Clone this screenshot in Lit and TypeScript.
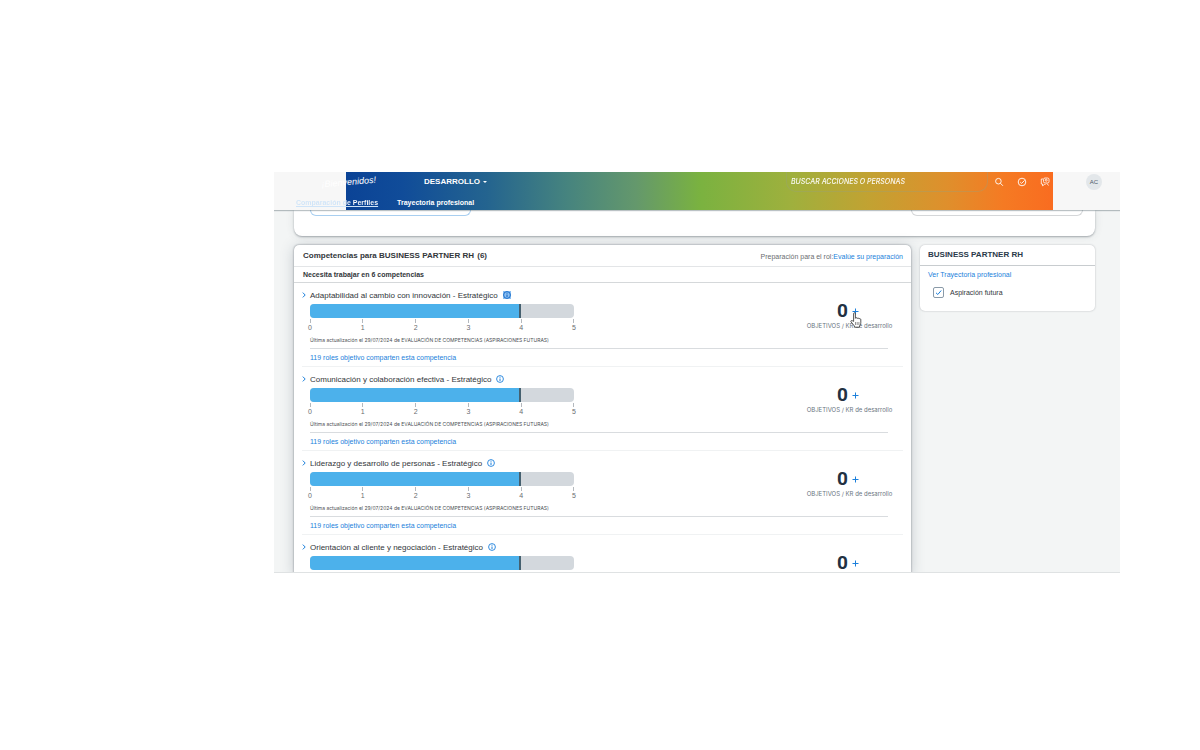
import { LitElement, html, css, svg, nothing } from "lit";
import { customElement, property } from "lit/decorators.js";

interface Competency {
  name: string;
  rating: number;
  goals: number;
  focused?: boolean;
  brief?: boolean;
}

const SCALE = [0, 1, 2, 3, 4, 5];

const COMPETENCIES: Competency[] = [
  { name: "Adaptabilidad al cambio con innovación - Estratégico", rating: 4, goals: 0, focused: true },
  { name: "Comunicación y colaboración efectiva - Estratégico", rating: 4, goals: 0 },
  { name: "Liderazgo y desarrollo de personas - Estratégico", rating: 4, goals: 0 },
  { name: "Orientación al cliente y negociación - Estratégico", rating: 4, goals: 0, brief: true },
];

const chevron = svg`<svg width="4" height="6" viewBox="0 0 4 6" fill="none" stroke="currentColor" stroke-width="1"><path d="M.8.6 3.2 3 .8 5.4"/></svg>`;
const info = svg`<svg width="8" height="8" viewBox="0 0 8 8" fill="none" stroke="currentColor"><circle cx="4" cy="4" r="3.4" stroke-width=".9"/><path d="M4 3.5v2.5M4 1.8v.9" stroke-width="1"/></svg>`;
const plus = svg`<svg width="7" height="7" viewBox="0 0 7 7" fill="none" stroke="currentColor" stroke-width="1"><path d="M3.5.5v6M.5 3.5h6"/></svg>`;
const hand = svg`<svg width="12" height="16" viewBox="0 0 12 16" fill="#fff" stroke="#2b2b2b" stroke-width=".8" stroke-linejoin="round"><path d="M3.6 9.4V1.7c0-1.3 1.8-1.3 1.8 0v4.6c.3-.9 1.7-.8 1.8.2.4-.7 1.7-.6 1.8.4.5-.6 1.8-.3 1.8.7v3.2c0 1.6-.9 2.2-1.2 3.2v1.2H4.4V14C3.5 12.800 2 11.200 1 9.800.5 8.900 1.500 8.200 2.300 8.700z"/><path d="M5.500 10v3M7.200 10v3M8.900 10v3" stroke-width=".5"/></svg>`;

@customElement("competency-row")
class CompetencyRow extends LitElement {
  @property({ attribute: false }) item!: Competency;

  static styles = css`
    :host {
      display: block;
      padding: 6px 0 3px;
      border-bottom: 1px solid #f0f2f3;
    }
    .title {
      display: flex;
      align-items: center;
      height: 12px;
    }
    .toggle,
    .info,
    .add {
      display: inline-flex;
      align-items: center;
      justify-content: center;
      padding: 0;
      border: 0;
      background: none;
      color: #1b7fdb;
      font: inherit;
      line-height: 0;
    }
    .toggle {
      width: 4px;
      margin-right: 4px;
    }
    h3 {
      margin: 0;
      font-size: 8px;
      font-weight: 400;
      color: #32363a;
    }
    .info {
      margin-left: 5px;
      width: 8px;
      height: 8px;
    }
    .info.focused {
      background: #8cc0f2;
      color: #0b63c4;
    }
    .body {
      display: flex;
      justify-content: space-between;
      margin: 3px 9px 0 8px;
    }
    .rating {
      flex: 0 1 264px;
    }
    .track {
      height: 14px;
      border-radius: 4px;
      background: #d3d8dd;
      overflow: hidden;
    }
    .fill {
      box-sizing: border-box;
      height: 100%;
      border-right: 2px solid #45606f;
      background: #4cb1eb;
    }
    .scale {
      display: flex;
      justify-content: space-between;
      margin: 1px -4px 0;
      padding: 0;
      list-style: none;
      font-size: 7px;
      line-height: 9px;
      color: #6a6d70;
    }
    .scale li {
      width: 8px;
      text-align: center;
    }
    .scale li::before {
      content: "";
      display: block;
      width: 1px;
      height: 4px;
      margin: 0 auto;
      background: #b4b9be;
    }
    .updated {
      margin: 4px 0;
      font: 5px/8px Inter, sans-serif;
      color: #4c5054;
      white-space: nowrap;
    }
    .score {
      width: 89px;
      text-align: center;
    }
    .count {
      display: flex;
      justify-content: center;
      align-items: center;
      gap: 4px;
      height: 14px;
      padding-right: 3px;
    }
    .count strong {
      width: 11px;
      font: 700 19px/14px Roboto, sans-serif;
      color: #223142;
    }
    .add {
      position: relative;
      width: 7px;
      height: 7px;
    }
    .add svg {
      flex: none;
    }
    .pointer {
      position: absolute;
      left: -2px;
      top: 4px;
      line-height: 0;
      z-index: 1;
    }
    .caption {
      margin: 3px 0 0;
      font: 6px/10px Inter, sans-serif;
      color: #6a7480;
    }
    .shared {
      margin: 0 15px 0 8px;
      padding-top: 4px;
      border-top: 1px solid #d9dcdf;
      font-size: 7px;
      line-height: 10px;
    }
    a {
      color: #1b7fdb;
      text-decoration: none;
    }
  `;

  render() {
    const { name, rating, goals, focused, brief } = this.item;
    return html`
      <div class="title">
        <button class="toggle" aria-label="Expandir">${chevron}</button>
        <h3>${name}</h3>
        <button class="info ${focused ? "focused" : ""}" aria-label="Información">${info}</button>
      </div>
      <div class="body">
        <div class="rating">
          <div class="track" role="meter" aria-label=${name} aria-valuemin="0" aria-valuemax="5" aria-valuenow=${rating}>
            <div class="fill" style="width:${(rating / 5) * 100}%"></div>
          </div>
          ${brief
            ? nothing
            : html`
                <ul class="scale">${SCALE.map((n) => html`<li>${n}</li>`)}</ul>
                <p class="updated">Última actualización el 29/07/2024 de EVALUACIÓN DE COMPETENCIAS (ASPIRACIONES FUTURAS)</p>
              `}
        </div>
        <div class="score">
          <div class="count">
            <strong>${goals}</strong>
            <button class="add" aria-label="Añadir objetivo">
              ${plus}${focused ? html`<span class="pointer">${hand}</span>` : nothing}
            </button>
          </div>
          ${brief ? nothing : html`<p class="caption">OBJETIVOS / KR de desarrollo</p>`}
        </div>
      </div>
      ${brief
        ? nothing
        : html`<div class="shared"><a href="#">119 roles objetivo comparten esta competencia</a></div>`}
    `;
  }
}

@customElement("app-root")
class AppRoot extends LitElement {
  static styles = css`
    :host {
      display: flex;
      box-sizing: border-box;
      height: 100vh;
      padding: 172px 80px 177px 274px;
      background: #fff;
      font-family: "Liberation Sans", Arial, sans-serif;
      font-size: 7px;
      color: #32363a;
    }
    a {
      color: #1b7fdb;
      text-decoration: none;
    }
    h2 {
      margin: 0;
      font-size: 8px;
      font-weight: 700;
    }
    .frame {
      flex: 1;
      box-sizing: border-box;
      display: flex;
      flex-direction: column;
      overflow: hidden;
      background: #f3f5f5;
      border-bottom: 1px solid #dfe2e3;
    }
    header {
      position: relative;
      z-index: 1;
      flex: none;
      background: linear-gradient(
          90deg,
          #0b4396 0%,
          #104c99 8%,
          #24648f 20%,
          #45837f 31%,
          #64986c 41%,
          #7ab240 50%,
          #9fb03d 63%,
          #c2a232 74%,
          #df8f2c 85%,
          #f57a23 93%,
          #f96c20 100%
        )
        72px 0 / calc(100% - 139px) 100% no-repeat #f7f7f7;
      box-shadow: 0 1px 1px rgba(60, 80, 90, 0.35);
      color: #fff;
    }
    .bar {
      display: flex;
      align-items: center;
      height: 20px;
      padding: 0 18px 0 47px;
    }
    .logo {
      width: 55px;
      font-size: 9px;
      font-style: italic;
      text-align: right;
      transform: rotate(-5deg);
    }
    .module {
      display: flex;
      align-items: center;
      gap: 3px;
      margin-left: 48px;
      padding: 0;
      border: 0;
      background: none;
      color: #fff;
      font: 700 8px/10px "Liberation Sans", Arial, sans-serif;
    }
    .search {
      box-sizing: border-box;
      width: 202px;
      height: 20px;
      margin-left: auto;
      padding: 0 4px;
      border: 1px solid rgba(150, 160, 130, 0.35);
      border-top: 0;
      border-radius: 0 0 10px 10px;
      background: none;
      outline: 0;
      color: #fff;
      font: italic 500 7px/10px Inter, sans-serif;
    }
    .search::placeholder {
      color: #fff;
      opacity: 0.95;
    }
    .tools {
      display: flex;
      align-items: center;
      gap: 13px;
      margin-left: 6px;
    }
    .tool {
      width: 10px;
      height: 10px;
      padding: 0;
      border: 0;
      background: none;
      color: #fff;
      line-height: 0;
    }
    .avatar {
      width: 16px;
      height: 16px;
      padding: 0;
      border: 0;
      border-radius: 50%;
      background: #e3e7ea;
      color: #4d5b68;
      font: 6px/16px "Liberation Sans", Arial, sans-serif;
    }
    nav {
      display: flex;
      gap: 19px;
      padding: 6px 22px 2px;
      font-weight: 700;
      line-height: 10px;
    }
    nav a {
      color: #fff;
    }
    nav a.current {
      background: linear-gradient(90deg, #cfe4f8 50px, #fff 50px);
      background-clip: text;
      color: transparent;
      text-decoration: underline;
      text-decoration-color: #cfe4f8;
    }
    .content {
      display: grid;
      grid-template-columns: minmax(0, 617fr) minmax(0, 175fr);
      gap: 9px;
      align-items: start;
      flex: 1;
      grid-template-rows: auto 1fr;
      padding: 0 25px 0 20px;
    }
    .card {
      border-radius: 5px;
      background: #fff;
      box-shadow: 0 0 2px rgba(60, 70, 80, 0.35);
    }
    .summary {
      grid-column: 1 / -1;
      display: flex;
      justify-content: space-between;
      align-items: flex-start;
      height: 26px;
      padding: 0 12px 0 16px;
      border-radius: 0 0 8px 8px;
      box-shadow: 0 1px 2px rgba(60, 70, 80, 0.4), 0 0 8px rgba(60, 70, 80, 0.12);
    }
    .pill {
      box-sizing: border-box;
      width: 161px;
      height: 6px;
      border: 1px solid #a9cff0;
      border-top: 0;
      border-radius: 0 0 7px 7px;
    }
    .pill.muted {
      width: 172px;
      border-color: #d5d7d9;
    }
    .competencies {
      align-self: stretch;
      border-radius: 5px 5px 0 0;
      box-shadow: 0 0 2px rgba(40, 50, 60, 0.6), 0 2px 14px rgba(50, 70, 90, 0.25);
    }
    .head {
      display: flex;
      justify-content: space-between;
      align-items: center;
      height: 21px;
      padding: 0 8px 0 9px;
      border-bottom: 1px solid #e3e5e7;
    }
    .head p,
    .need {
      margin: 0;
    }
    .head p {
      padding-top: 2px;
      color: #6a6d70;
    }
    .head h2 span {
      margin-left: 1px;
    }
    .need {
      padding: 0 9px;
      border-bottom: 1px solid #d5d8da;
      font-size: 7px;
      line-height: 15px;
    }
    .rows {
      padding: 0 8px;
    }
    .role h2 {
      padding: 0 8px;
      line-height: 20px;
      border-bottom: 1px solid #c8cccf;
      color: #2a3a4a;
    }
    .role .links {
      padding: 4px 8px 13px;
      line-height: 10px;
    }
    .role label {
      display: flex;
      align-items: center;
      gap: 6px;
      margin: 7px 0 0 5px;
    }
    .role input {
      appearance: none;
      box-sizing: border-box;
      width: 11px;
      height: 11px;
      margin: 0;
      border: 1px solid #8a9aa8;
      border-radius: 2px;
      background: #fff
        url("data:image/svg+xml,%3Csvg xmlns='http://www.w3.org/2000/svg' viewBox='0 0 9 9' fill='none' stroke='%231b7fdb'%3E%3Cpath d='M2 4.800 3.800 6.500 7.200 2.500'/%3E%3C/svg%3E")
        center / 9px 9px no-repeat;
    }
  `;

  render() {
    return html`
      <div class="frame">
        <header>
          <div class="bar">
            <span class="logo">¡Bienvenidos!</span>
            <button class="module">
              DESARROLLO
              <svg width="4" height="2" viewBox="0 0 4 2" fill="currentColor"><path d="M0 0h4L2 2z" /></svg>
            </button>
            <input class="search" type="search" aria-label="Buscar" placeholder="BUSCAR ACCIONES O PERSONAS" />
            <div class="tools">
              <button class="tool" aria-label="Buscar">
                <svg width="10" height="10" viewBox="0 0 10 10" fill="none" stroke="currentColor" stroke-width=".9"><circle cx="4.400" cy="4.200" r="2.800" /><path d="m6.500 6.300 2.400 2.500" /></svg>
              </button>
              <button class="tool" aria-label="Tareas">
                <svg width="10" height="10" viewBox="0 0 10 10" fill="none" stroke="currentColor" stroke-width=".9"><circle cx="5" cy="5" r="3.800" /><path d="m3.200 5 1.400 1.400 3-3" /></svg>
              </button>
              <button class="tool" aria-label="Ayuda">
                <svg width="10" height="10" viewBox="0 0 10 10" fill="none" stroke="currentColor" stroke-width=".8"><path d="M3 2H1.300v5H2.500v1.800L4.500 7.500h1" /><rect x="3.500" y="1" width="5.500" height="5" rx="1.500" /><circle cx="6.200" cy="3.200" r="1" /><path d="M7 6.500l1.500 2" /></svg>
              </button>
              <button class="tool" aria-label="Notificaciones"></button>
              <button class="avatar">AC</button>
            </div>
          </div>
          <nav>
            <a class="current" href="#">Comparación de Perfiles</a>
            <a href="#">Trayectoria profesional</a>
          </nav>
        </header>
        <main class="content">
          <section class="card summary">
            <div class="pill"></div>
            <div class="pill muted"></div>
          </section>
          <section class="card competencies">
            <div class="head">
              <h2>Competencias para BUSINESS PARTNER RH <span>(6)</span></h2>
              <p>Preparación para el rol:<a href="#">Evalúe su preparación</a></p>
            </div>
            <h3 class="need">Necesita trabajar en 6 competencias</h3>
            <div class="rows">
              ${COMPETENCIES.map((c) => html`<competency-row .item=${c}></competency-row>`)}
            </div>
          </section>
          <aside class="card role">
            <h2>BUSINESS PARTNER RH</h2>
            <div class="links">
              <a href="#">Ver Trayectoria profesional</a>
              <label><input type="checkbox" checked />Aspiración futura</label>
            </div>
          </aside>
        </main>
      </div>
    `;
  }
}
